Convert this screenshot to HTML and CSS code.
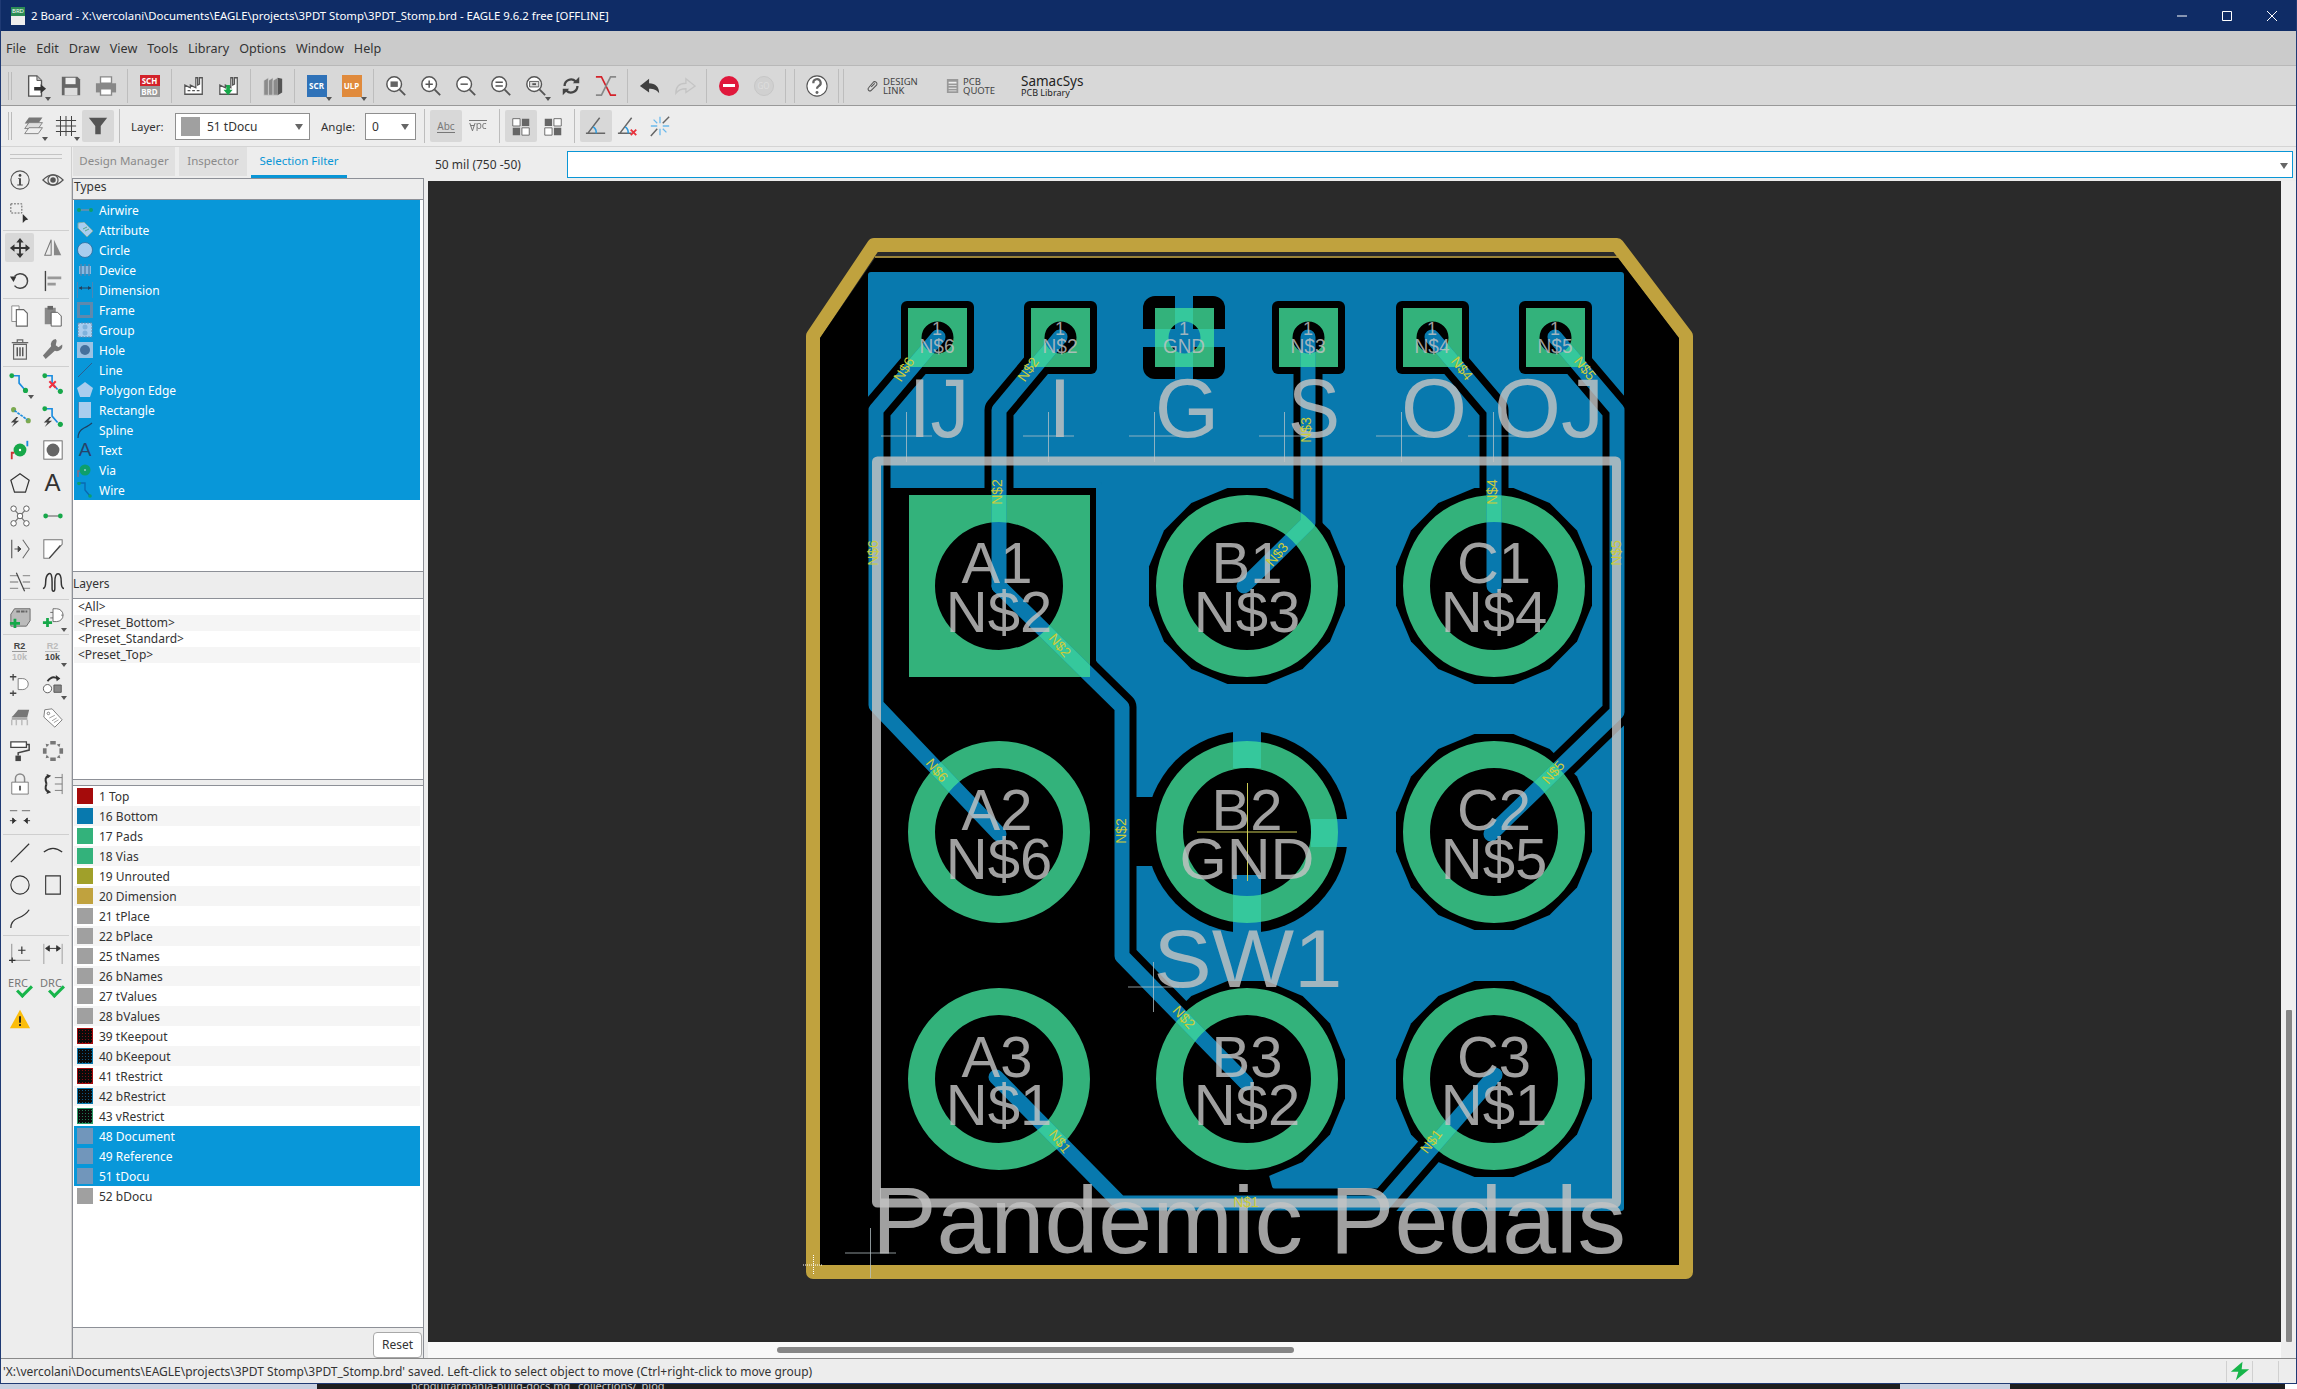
FILE: index.html
```html
<!DOCTYPE html>
<html lang="en">
<head>
    <meta charset="UTF-8">
    <title>2 Board - EAGLE</title>
    <link rel="stylesheet" href="styles.css">
</head>
<body>
<!-- icon sheet -->
<svg class="sheet" xmlns="http://www.w3.org/2000/svg">
    <symbol id="new" viewBox="0 0 24 24"><path d="M4 1h9l5 5v17H4z" fill="#fff" stroke="#555" stroke-width="1.5"/><path d="M13 1v5h5" fill="#bbb" stroke="#555"/><path d="M10 13h7v-3l6 5-6 5v-3h-7z" fill="#333"/></symbol>
    <symbol id="save" viewBox="0 0 24 24"><path d="M2 2h17l3 3v17H2z" fill="#666"/><path d="M6 3h11v7H6z" fill="#eee"/><path d="M5 14h14v8H5z" fill="#ddd"/></symbol>
    <symbol id="print" viewBox="0 0 24 24"><path d="M6 2h12v7H6z" fill="#fff" stroke="#888" stroke-width="1.5"/><path d="M1 9h22v10H1z" fill="#888"/><path d="M6 15h12v7H6z" fill="#fff" stroke="#888" stroke-width="1.5"/></symbol>
    <symbol id="factory" viewBox="0 0 24 24"><path d="M2 21V11l6 3v-3l6 3V3h2v8l2-1V3h3v18z" fill="#fff" stroke="#555" stroke-width="1.4"/><path d="M5 17h3M10 17h3M15 17h3" stroke="#555" stroke-width="1.4"/></symbol>
    <symbol id="factory2" viewBox="0 0 24 24"><path d="M2 21V11l6 3v-3l6 3V3h2v8l2-1V3h3v18z" fill="#fff" stroke="#555" stroke-width="1.4"/><path d="M9 11h4v5h3l-5 6-5-6h3z" fill="#17a84a"/></symbol>
    <symbol id="books" viewBox="0 0 24 24"><path d="M2 6l5-3v19H2zM7 6l5-3v19H7zM12 6l5-3v19h-5z" fill="#8b8b8b" stroke="#d8d8d8" stroke-width=".6"/><path d="M17 3l5 1v15l-5 3z" fill="#555"/></symbol>
    <symbol id="zoomfit" viewBox="0 0 24 24"><circle cx="10" cy="10" r="8" fill="#fff" stroke="#555" stroke-width="1.6"/><path d="M6 7h8v6H6z" fill="#666"/><path d="M16 16l6 6" stroke="#555" stroke-width="2"/></symbol>
    <symbol id="zoomin" viewBox="0 0 24 24"><circle cx="10" cy="10" r="8" fill="#fff" stroke="#555" stroke-width="1.6"/><path d="M6 10h8M10 6v8" stroke="#555" stroke-width="1.6"/><path d="M16 16l6 6" stroke="#555" stroke-width="2"/></symbol>
    <symbol id="zoomout" viewBox="0 0 24 24"><circle cx="10" cy="10" r="8" fill="#fff" stroke="#555" stroke-width="1.6"/><path d="M6 10h8" stroke="#555" stroke-width="1.6"/><path d="M16 16l6 6" stroke="#555" stroke-width="2"/></symbol>
    <symbol id="zoomsel" viewBox="0 0 24 24"><circle cx="10" cy="10" r="8" fill="#fff" stroke="#555" stroke-width="1.6"/><path d="M6 8h8M6 12h8" stroke="#555" stroke-width="1.6"/><path d="M16 16l6 6" stroke="#555" stroke-width="2"/></symbol>
    <symbol id="zoomprev" viewBox="0 0 24 24"><circle cx="10" cy="10" r="8" fill="#fff" stroke="#555" stroke-width="1.6"/><path d="M5 7h10v6H5z" fill="#ddd" stroke="#555"/><path d="M8 9h4v2H8z" fill="#555"/><path d="M16 16l6 6" stroke="#555" stroke-width="2"/></symbol>
    <symbol id="redraw" viewBox="0 0 24 24"><path d="M5 12a7 7 0 0 1 12-5" fill="none" stroke="#444" stroke-width="2.5"/><path d="M19 12a7 7 0 0 1-12 5" fill="none" stroke="#444" stroke-width="2.5"/><path d="M14 9h7V2zM10 15H3v7z" fill="#444"/></symbol>
    <symbol id="ratsnest" viewBox="0 0 24 24"><path d="M1 2h6l10 20h6" fill="none" stroke="#d3222a" stroke-width="1.8"/><path d="M23 2h-6L7 22H1" fill="none" stroke="#888" stroke-width="1.8"/></symbol>
    <symbol id="undo" viewBox="0 0 24 24"><path d="M11 4L1 12l10 7v-4c5 0 8 1 11 5 0-7-4-11-11-11z" fill="#3f3f3f"/></symbol>
    <symbol id="redo" viewBox="0 0 24 24"><path d="M13 4l10 8-10 7v-4c-5 0-8 1-11 5 0-7 4-11 11-11z" fill="none" stroke="#c4c4c4" stroke-width="1.4"/></symbol>
    <symbol id="help" viewBox="0 0 24 24"><circle cx="12" cy="12" r="11" fill="#fff" stroke="#555" stroke-width="1.2"/><path d="M8 9a4 4 0 1 1 6 3c-1 1-2 1-2 3" fill="none" stroke="#666" stroke-width="2.4"/><circle cx="12" cy="19" r="1.6" fill="#666"/></symbol>
    <symbol id="linkic" viewBox="0 0 16 16"><path d="M6 9l4-4M3 10l5-6a2 2 0 0 1 4 3l-6 6a2 2 0 0 1-3-3z" fill="none" stroke="#555" stroke-width="1.2"/></symbol>
    <symbol id="quoteic" viewBox="0 0 16 16"><path d="M1 0h13v16H1z" fill="#999"/><path d="M3 3h9v2H3zM3 7h9v1H3zM3 10h9v1H3zM3 13h9v1H3z" fill="#eee"/></symbol>
    <symbol id="layers" viewBox="0 0 26 26"><path d="M7 3h16l-5 7H2z" fill="#777"/><path d="M7 9h16l-5 7H2z" fill="#ddd" stroke="#777"/><path d="M7 15h16l-5 7H2z" fill="#eee" stroke="#777"/></symbol>
    <symbol id="grid" viewBox="0 0 24 24"><path d="M6 1v22M12 1v22M18 1v22M1 6h22M1 12h22M1 18h22" stroke="#444" stroke-width="1.1"/></symbol>
    <symbol id="filter" viewBox="0 0 24 24"><path d="M2 3h20l-7 9v9H9v-9z" fill="#555"/></symbol>
    <symbol id="four1" viewBox="0 0 24 24"><path d="M3 4h8v8H3zM13 14h8v8h-8z" fill="#fff" stroke="#666"/><path d="M13 4h8v8h-8zM3 14h8v8H3z" fill="#666"/></symbol>
    <symbol id="four2" viewBox="0 0 24 24"><path d="M13 4h8v8h-8zM3 14h8v8H3z" fill="#fff" stroke="#666"/><path d="M3 4h8v8H3zM13 14h8v8h-8z" fill="#666"/></symbol>
    <symbol id="angle1" viewBox="0 0 24 24"><path d="M1 20h21M3 20L16 3" stroke="#666" stroke-width="1.6"/><path d="M9 13q4 3 3 7" fill="none" stroke="#2a9be0" stroke-width="1.6"/></symbol>
    <symbol id="angle2" viewBox="0 0 24 24"><path d="M1 20h15M3 20L16 3" stroke="#666" stroke-width="1.6"/><path d="M9 13q4 3 3 7" fill="none" stroke="#2a9be0" stroke-width="1.6"/><path d="M15 16l6 6M21 16l-6 6" stroke="#e8323c" stroke-width="2"/></symbol>
    <symbol id="angle3" viewBox="0 0 24 24"><path d="M2 23L9 15M15 9l7-7" stroke="#666" stroke-width="1.6"/><path d="M12 2v7M12 15v7M2 12h7M15 12h7M5 5l4 4M15 15l4 4" stroke="#6ab9ec" stroke-width="1.4"/></symbol>

    <symbol id="info" viewBox="0 0 24 24"><circle cx="12" cy="12" r="10" fill="none" stroke="#555" stroke-width="1.2"/><circle cx="12" cy="7" r="1.5" fill="#444"/><path d="M10 10h3v7h2v1H9v-1h2v-6h-1z" fill="#444"/></symbol>
    <symbol id="eye" viewBox="0 0 24 24"><path d="M1 12q11-11 22 0q-11 11-22 0z" fill="none" stroke="#555" stroke-width="1.3"/><circle cx="12" cy="12" r="5.5" fill="none" stroke="#555" stroke-width="1.3"/><circle cx="12" cy="12" r="3" fill="#555"/></symbol>
    <symbol id="marquee" viewBox="0 0 24 24"><rect x="2" y="2" width="12" height="10" fill="none" stroke="#555" stroke-dasharray="2 1.5"/><path d="M15 13v10l3-3 3-1z" fill="#333"/></symbol>
    <symbol id="move" viewBox="0 0 24 24"><path d="M12 1l4 5h-3v5h5V8l5 4-5 4v-3h-5v5h3l-4 5-4-5h3v-5H6v3l-5-4 5-4v3h5V6H8z" fill="#333"/></symbol>
    <symbol id="mirror" viewBox="0 0 24 24"><path d="M10 3v17H3z" fill="none" stroke="#777" stroke-width="1.1"/><path d="M13 3v17h8z" fill="#888"/></symbol>
    <symbol id="rotate" viewBox="0 0 24 24"><path d="M6 7a8 8 0 1 1 0 10" fill="none" stroke="#444" stroke-width="1.6"/><path d="M1 7h7l-3 6z" fill="#333"/></symbol>
    <symbol id="align" viewBox="0 0 24 24"><path d="M3 1h1.5v22H3z" fill="#444"/><path d="M6 7h15v3H6zM6 14h9v3H6z" fill="#999"/></symbol>
    <symbol id="copy" viewBox="0 0 24 24"><path d="M3 1h8v17H3z" fill="#fff" stroke="#888"/><path d="M8 5h8l4 4v14H8z" fill="#fff" stroke="#666" stroke-width="1.2"/></symbol>
    <symbol id="paste" viewBox="0 0 24 24"><path d="M3 3h12v18H3z" fill="#888"/><path d="M6 1h6v4H6z" fill="#666"/><path d="M10 8h7l4 4v11H10z" fill="#fff" stroke="#555"/></symbol>
    <symbol id="trash" viewBox="0 0 24 24"><path d="M3 5h18M9 5V2h6v3M5 7h14v16H5z" fill="none" stroke="#666" stroke-width="1.3"/><path d="M9 10v10M12 10v10M15 10v10" stroke="#555" stroke-width="1.6"/></symbol>
    <symbol id="wrench" viewBox="0 0 24 24"><path d="M15 1a6 6 0 0 0-5 8L1 19l3 4 10-9a6 6 0 0 0 8-7l-4 3-3-2 1-5z" fill="#777"/></symbol>
    <symbol id="route" viewBox="0 0 24 24"><path d="M4 3h7v8l6 7" fill="none" stroke="#1b8de0" stroke-width="1.8"/><circle cx="3" cy="3" r="2.6" fill="#17a84a"/><circle cx="18" cy="19" r="2.8" fill="#17a84a"/></symbol>
    <symbol id="ripup" viewBox="0 0 24 24"><path d="M4 3h7v8l6 7" fill="none" stroke="#1b8de0" stroke-width="1.8"/><circle cx="3" cy="3" r="2.6" fill="#17a84a"/><circle cx="20" cy="20" r="2.8" fill="#17a84a"/><path d="M8 9l7 7M15 9l-7 7" stroke="#f03040" stroke-width="2.2"/></symbol>
    <symbol id="split" viewBox="0 0 24 24"><circle cx="5" cy="4" r="2.8" fill="#7caa50"/><circle cx="21" cy="16" r="2.8" fill="#7caa50"/><path d="M6 5l14 10" stroke="#1b8de0" stroke-dasharray="3 1" stroke-width="1.8"/><path d="M8 12l-6 6h4l-3 5 8-7H7l3-4z" fill="#444"/></symbol>
    <symbol id="split2" viewBox="0 0 24 24"><path d="M4 3h7v8l6 7" fill="none" stroke="#1b8de0" stroke-width="1.8"/><circle cx="3" cy="3" r="2.6" fill="#17a84a"/><circle cx="20" cy="20" r="2.8" fill="#17a84a"/><path d="M8 12l-6 6h4l-3 5 8-7H7l3-4z" fill="#444"/></symbol>
    <symbol id="via" viewBox="0 0 24 24"><path d="M3 22v-7h3" fill="none" stroke="#c33" stroke-width="2"/><path d="M20 8V2" stroke="#1b8de0" stroke-width="2"/><circle cx="12" cy="12" r="7" fill="#17a84a"/><circle cx="12" cy="12" r="1.3" fill="#fff"/></symbol>
    <symbol id="hole" viewBox="0 0 24 24"><rect x="2" y="2" width="20" height="20" fill="#fff" stroke="#666"/><circle cx="12" cy="12" r="7" fill="#666"/></symbol>
    <symbol id="poly" viewBox="0 0 24 24"><path d="M12 2l10 7-4 13H6L2 9z" fill="none" stroke="#333" stroke-width="1.3"/></symbol>
    <symbol id="star" viewBox="0 0 24 24"><path d="M5 4l14 16M19 4L5 20" stroke="#777" stroke-width="1.3"/><circle cx="5" cy="4" r="3" fill="#fff" stroke="#555"/><circle cx="19" cy="4" r="3" fill="#fff" stroke="#555"/><circle cx="5" cy="20" r="3" fill="#fff" stroke="#555"/><circle cx="19" cy="20" r="3" fill="#fff" stroke="#555"/><circle cx="12" cy="12" r="3" fill="#fff" stroke="#555"/></symbol>
    <symbol id="airw" viewBox="0 0 24 24"><path d="M4 12h16" stroke="#888" stroke-width="1.6"/><circle cx="4" cy="12" r="2.6" fill="#17a84a"/><circle cx="20" cy="12" r="2.6" fill="#17a84a"/></symbol>
    <symbol id="bus" viewBox="0 0 24 24"><path d="M3 2v20" stroke="#555" stroke-width="1.2"/><path d="M6 12h7M13 12l-3-3v6z" stroke="#444" fill="#444"/><path d="M15 2l7 10-7 10" fill="none" stroke="#666" stroke-width="1.1"/></symbol>
    <symbol id="miter" viewBox="0 0 24 24"><path d="M2 2h20v5L8 22H2z" fill="#fff" stroke="#777" stroke-width="1.1"/><path d="M8 22L20 8" stroke="#444" stroke-width="1.3"/></symbol>
    <symbol id="lines" viewBox="0 0 24 24"><path d="M1 5h9M1 12h9M1 19h9M15 5h8M15 12h8M15 19h8" stroke="#999" stroke-width="1.4"/><path d="M8 2l9 20" stroke="#444" stroke-width="1.3"/></symbol>
    <symbol id="meander" viewBox="0 0 24 24"><path d="M1 19q3 0 3-7t3.500-9 3.500 9v7q0 3 1.500 3t1.500-3v-7q0-9 3.500-9t3.500 9q0 7 3 7" fill="none" stroke="#333" stroke-width="1.6"/></symbol>
    <symbol id="addpart" viewBox="0 0 24 24"><path d="M2 9l4-6h17v13l-4 6H2z" fill="#bbb" stroke="#666"/><path d="M8 6h12" stroke="#666" stroke-width="2" stroke-dasharray="4 1"/><path d="M1 19h11M6.500 14v10" stroke="#17a84a" stroke-width="3"/></symbol>
    <symbol id="addgate" viewBox="0 0 24 24"><path d="M12 3h4a7 7 0 0 1 0 14h-4z" fill="#fff" stroke="#666"/><path d="M23 10h-2M12 7H9M12 13H9" stroke="#666"/><path d="M1 18h10M6 13v10" stroke="#17a84a" stroke-width="3"/></symbol>
    <symbol id="invoke" viewBox="0 0 24 24"><path d="M10 5h5a6 6 0 0 1 0 12h-5z" fill="#fff" stroke="#777"/><path d="M1 3h7M4.500 0v7M1 21h7M4.500 18v6" stroke="#444" stroke-width="1.4"/></symbol>
    <symbol id="replace" viewBox="0 0 24 24"><circle cx="6" cy="16" r="4.500" fill="#fff" stroke="#555"/><path d="M13 12h8v8h-8z" fill="#888" stroke="#555"/><path d="M6 8q5-7 11-3" fill="none" stroke="#333" stroke-width="2"/><path d="M15 1l5 4-4 3z" fill="#333"/></symbol>
    <symbol id="chip" viewBox="0 0 24 24"><path d="M5 9l5-6h12l-2 8H3z" fill="#777"/><path d="M3 11h17v3H3z" fill="#aaa"/><path d="M3 14v6M8 14v6M14 14v6M20 14v6" stroke="#bbb" stroke-width="1.6"/></symbol>
    <symbol id="tag" viewBox="0 0 24 24"><path d="M3 3l8-1 11 12-8 8L2 11z" fill="#fff" stroke="#777"/><circle cx="7" cy="7" r="1.400" fill="none" stroke="#777"/><path d="M8 12l6-3M11 15l5-3M13 17l5-3" stroke="#999"/></symbol>
    <symbol id="paint" viewBox="0 0 24 24"><path d="M2 2h17v6H2z" fill="#fff" stroke="#444" stroke-width="1.4"/><path d="M19 5h3v6L10 14v3" fill="none" stroke="#444" stroke-width="1.6"/><path d="M7 17h6v6H7z" fill="#444"/></symbol>
    <symbol id="ring" viewBox="0 0 24 24"><path d="M9 1h6v4H9zM9 19h6v4H9zM1 9h4v6H1zM19 9h4v6h-4zM4 4l4 1-3 3zM20 4l-1 4-3-3zM4 20l1-4 3 3zM20 20l-4-1 3-3z" fill="#777"/></symbol>
    <symbol id="lock" viewBox="0 0 24 24"><path d="M7 10V6a5 5 0 0 1 10 0v4" fill="none" stroke="#888" stroke-width="1.6"/><path d="M3 10h18v13H3z" fill="#fff" stroke="#777"/><path d="M11 14h2v5h-2z" fill="#555"/></symbol>
    <symbol id="swap" viewBox="0 0 24 24"><path d="M7 3q-5 2-2 9M7 21q-5-3-2-9" fill="none" stroke="#333" stroke-width="2.200"/><path d="M5 1l5 2-4 3zM5 23l5-2-4-3z" fill="#333"/><path d="M22 1v22M14 5h8M14 12h8M14 19h8" stroke="#777"/></symbol>
    <symbol id="gather" viewBox="0 0 24 24"><path d="M1 5h8M14 5h9" stroke="#888" stroke-width="1.400"/><path d="M1 16h7M7 16l-3-3v6zM23 16h-7M17 16l3-3v6z" stroke="#333" fill="#333"/></symbol>
    <symbol id="line" viewBox="0 0 24 24"><path d="M2 23L22 3" stroke="#333" stroke-width="1.300"/></symbol>
    <symbol id="arc" viewBox="0 0 24 24"><path d="M2 12q10-8 20 0" fill="none" stroke="#333" stroke-width="1.300"/></symbol>
    <symbol id="circ" viewBox="0 0 24 24"><circle cx="12" cy="12" r="10" fill="none" stroke="#333" stroke-width="1.200"/></symbol>
    <symbol id="rect" viewBox="0 0 24 24"><path d="M4 2h16v20H4z" fill="none" stroke="#333" stroke-width="1.200"/></symbol>
    <symbol id="curve" viewBox="0 0 24 24"><path d="M2 23q0-8 8-11t12-9" fill="none" stroke="#333" stroke-width="1.400"/></symbol>
    <symbol id="mark" viewBox="0 0 24 24"><path d="M3 2v20M1 20h22" stroke="#888" stroke-width="1"/><path d="M10 9h8M14 5v8M0 20h7M3.500 17v6" stroke="#333" stroke-width="1.300"/></symbol>
    <symbol id="dimen" viewBox="0 0 24 24"><path d="M2 2v22M22 2v22" stroke="#999"/><path d="M4 7h16M4 7l4-3v6zM20 7l-4-3v6z" stroke="#333" fill="#333"/></symbol>
    <symbol id="warn" viewBox="0 0 24 24"><path d="M12 2l11 20H1z" fill="#fbbd0a"/><path d="M11 9h2v7h-2zM11 17.500h2v2h-2z" fill="#222"/></symbol>
    <symbol id="bolt" viewBox="0 0 24 24"><path d="M15 1L1 13h9l-3 10 16-13h-9z" fill="#17b54a"/></symbol>

    <symbol id="f-air" viewBox="0 0 16 16"><path d="M3 8h10" stroke="#6f8fa8" stroke-width="1.500"/><circle cx="2" cy="8" r="2" fill="#0e9f6b"/><circle cx="14" cy="8" r="2" fill="#0e9f6b"/></symbol>
    <symbol id="f-tag" viewBox="0 0 16 16"><path d="M1 1l6-1 9 9-6 6-9-9z" fill="#a9cdee" stroke="#7aa"/><path d="M6 7l4-2M8 9l4-2" stroke="#5a8"/></symbol>
    <symbol id="f-circ" viewBox="0 0 16 16"><circle cx="8" cy="8" r="7.500" fill="#a9cdee" stroke="#2b6c9e" stroke-width=".8"/></symbol>
    <symbol id="f-dev" viewBox="0 0 16 16"><path d="M2 4h12v8H2z" fill="#8ab8e0"/><path d="M4 2v12M8 2v12M12 2v12" stroke="#4f86b3" stroke-width="1.500"/></symbol>
    <symbol id="f-dim" viewBox="0 0 16 16"><path d="M.5 0v16M15.500 0v16" stroke="#4b86b5"/><path d="M2 6h12" stroke="#22415f"/><path d="M2 6l3-2v4zM14 6l-3-2v4z" fill="#22415f"/></symbol>
    <symbol id="f-frame" viewBox="0 0 16 16"><path d="M0 0h16v16H0z" fill="#5f89ad"/><path d="M3 3h10v10H3z" fill="#0897d9"/></symbol>
    <symbol id="f-group" viewBox="0 0 16 16"><path d="M1 1h14v14H1z" fill="#a9cdee" stroke="#5f89ad" stroke-dasharray="2 1"/><circle cx="8" cy="5" r="2.500" fill="#7fb2dc"/><circle cx="8" cy="11" r="2.500" fill="#7fb2dc"/></symbol>
    <symbol id="f-hole" viewBox="0 0 16 16"><path d="M0 0h16v16H0z" fill="#9cc2e3"/><circle cx="8" cy="8" r="5" fill="#45709c"/></symbol>
    <symbol id="f-line" viewBox="0 0 16 16"><path d="M1 15L15 1" stroke="#2c5f8f"/></symbol>
    <symbol id="f-poly" viewBox="0 0 16 16"><path d="M8 0l8 6-3 9H3L0 6z" fill="#a9cdee"/></symbol>
    <symbol id="f-rect" viewBox="0 0 16 16"><path d="M2 0h12v16H2z" fill="#a9cdee"/><path d="M1.500 0v16" stroke="#4b86b5"/></symbol>
    <symbol id="f-spl" viewBox="0 0 16 16"><path d="M1 16q0-7 6-10t8-5" fill="none" stroke="#1f3f60" stroke-width="1.100"/></symbol>
    <symbol id="f-via" viewBox="0 0 16 16"><path d="M1 15v-6h2" fill="none" stroke="#8f6a80" stroke-width="1.400"/><circle cx="8" cy="8" r="5.500" fill="#0e9f6b"/><circle cx="8" cy="8" r="1" fill="#9cc"/></symbol>
    <symbol id="f-wire" viewBox="0 0 16 16"><path d="M2 1h6v7l5 6" fill="none" stroke="#0a6ab0" stroke-width="1.400"/><circle cx="2" cy="1.500" r="1.800" fill="#0e9f6b"/><circle cx="13" cy="14" r="1.800" fill="#0e9f6b"/></symbol>
</svg>

<div class="window">
    <header class="titlebar">
        <span class="app-icon"><span class="app-icon-txt">BRD</span></span>
        <span class="title-text">2 Board - X:\vercolani\Documents\EAGLE\projects\3PDT Stomp\3PDT_Stomp.brd - EAGLE 9.6.2 free [OFFLINE]</span>
        <div class="win-btns">
            <svg class="win-btn" viewBox="0 0 12 12"><path d="M1 6h10" stroke="#fff" stroke-width="1"/></svg>
            <svg class="win-btn" viewBox="0 0 12 12"><path d="M1.500 1.500h9v9h-9z" fill="none" stroke="#fff" stroke-width="1"/></svg>
            <svg class="win-btn" viewBox="0 0 12 12"><path d="M1 1l10 10M11 1L1 11" stroke="#fff" stroke-width="1"/></svg>
        </div>
    </header>

    <nav class="menubar">
        <a>File</a><a>Edit</a><a>Draw</a><a>View</a><a>Tools</a><a>Library</a><a>Options</a><a>Window</a><a>Help</a>
    </nav>

    <!-- main toolbar -->
    <div class="toolbar tb-main">
        <span class="grip"></span>
        <span class="tool drop"><svg class="ico"><use href="#new"/></svg></span>
        <span class="tool"><svg class="ico"><use href="#save"/></svg></span>
        <span class="tool"><svg class="ico"><use href="#print"/></svg></span>
        <span class="sep"></span>
        <span class="tool"><span class="schbrd"><span>SCH</span><span>BRD</span></span></span>
        <span class="sep"></span>
        <span class="tool"><svg class="ico"><use href="#factory"/></svg></span>
        <span class="tool"><svg class="ico"><use href="#factory2"/></svg></span>
        <span class="sep"></span>
        <span class="tool"><svg class="ico"><use href="#books"/></svg></span>
        <span class="sep"></span>
        <span class="tool drop"><span class="badge badge-blue">SCR</span></span>
        <span class="tool drop"><span class="badge badge-orange">ULP</span></span>
        <span class="sep"></span>
        <span class="tool"><svg class="ico"><use href="#zoomfit"/></svg></span>
        <span class="tool"><svg class="ico"><use href="#zoomin"/></svg></span>
        <span class="tool"><svg class="ico"><use href="#zoomout"/></svg></span>
        <span class="tool"><svg class="ico"><use href="#zoomsel"/></svg></span>
        <span class="tool drop"><svg class="ico"><use href="#zoomprev"/></svg></span>
        <span class="tool"><svg class="ico"><use href="#redraw"/></svg></span>
        <span class="tool"><svg class="ico"><use href="#ratsnest"/></svg></span>
        <span class="sep"></span>
        <span class="tool"><svg class="ico"><use href="#undo"/></svg></span>
        <span class="tool"><svg class="ico"><use href="#redo"/></svg></span>
        <span class="sep"></span>
        <span class="tool"><span class="stop"></span></span>
        <span class="tool"><span class="go">GO</span></span>
        <span class="sep"></span>
        <span class="sep"></span>
        <span class="tool"><svg class="ico"><use href="#help"/></svg></span>
        <span class="sep"></span>
        <span class="sep sep-double"></span>
        <span class="link-btn link-design"><svg class="ico-sm"><use href="#linkic"/></svg><span class="link-txt">DESIGN<br>LINK</span></span>
        <span class="link-btn link-quote"><svg class="ico-sm"><use href="#quoteic"/></svg><span class="link-txt">PCB<br>QUOTE</span></span>
        <span class="samac"><span class="samac-big">SamacSys</span><span class="samac-small">PCB Library</span></span>
    </div>

    <!-- parameter toolbar -->
    <div class="toolbar tb-param">
        <span class="grip"></span>
        <span class="tool tool-param drop"><svg class="ico"><use href="#layers"/></svg></span>
        <span class="tool tool-param drop"><svg class="ico"><use href="#grid"/></svg></span>
        <span class="tool tool-param on"><svg class="ico"><use href="#filter"/></svg></span>
        <span class="sep"></span>
        <label class="param-label">Layer:</label>
        <span class="select select-layer"><span class="select-swatch"></span>51 tDocu<span class="arrow"></span></span>
        <label class="param-label">Angle:</label>
        <span class="select select-angle">0<span class="arrow"></span></span>
        <span class="sep"></span>
        <span class="tool tool-param on"><span class="abc">Abc</span></span>
        <span class="tool tool-param"><span class="abc abc-flip">Abc</span></span>
        <span class="sep"></span>
        <span class="tool tool-param on"><svg class="ico"><use href="#four1"/></svg></span>
        <span class="tool tool-param"><svg class="ico"><use href="#four2"/></svg></span>
        <span class="sep"></span>
        <span class="tool tool-param on"><svg class="ico"><use href="#angle1"/></svg></span>
        <span class="tool tool-param"><svg class="ico"><use href="#angle2"/></svg></span>
        <span class="tool tool-param"><svg class="ico"><use href="#angle3"/></svg></span>
    </div>

    <div class="workspace">
        <!-- command icons -->
        <aside class="cmds">
            <div class="cmds-grip"></div>
            <div class="tgroup">
                <span class="cmd"><svg class="ico"><use href="#info"/></svg></span>
                <span class="cmd"><svg class="ico"><use href="#eye"/></svg></span>
                <span class="cmd"><svg class="ico"><use href="#marquee"/></svg></span>
                <span class="cmd"></span>
            </div>
            <div class="tgroup">
                <span class="cmd on"><svg class="ico"><use href="#move"/></svg></span>
                <span class="cmd"><svg class="ico"><use href="#mirror"/></svg></span>
                <span class="cmd"><svg class="ico"><use href="#rotate"/></svg></span>
                <span class="cmd"><svg class="ico"><use href="#align"/></svg></span>
            </div>
            <div class="tgroup">
                <span class="cmd"><svg class="ico"><use href="#copy"/></svg></span>
                <span class="cmd"><svg class="ico"><use href="#paste"/></svg></span>
                <span class="cmd"><svg class="ico"><use href="#trash"/></svg></span>
                <span class="cmd"><svg class="ico"><use href="#wrench"/></svg></span>
            </div>
            <div class="tgroup">
                <span class="cmd drop"><svg class="ico"><use href="#route"/></svg></span>
                <span class="cmd"><svg class="ico"><use href="#ripup"/></svg></span>
                <span class="cmd"><svg class="ico"><use href="#split"/></svg></span>
                <span class="cmd"><svg class="ico"><use href="#split2"/></svg></span>
                <span class="cmd"><svg class="ico"><use href="#via"/></svg></span>
                <span class="cmd"><svg class="ico"><use href="#hole"/></svg></span>
                <span class="cmd"><svg class="ico"><use href="#poly"/></svg></span>
                <span class="cmd"><span class="big-a">A</span></span>
                <span class="cmd"><svg class="ico"><use href="#star"/></svg></span>
                <span class="cmd"><svg class="ico"><use href="#airw"/></svg></span>
                <span class="cmd"><svg class="ico"><use href="#bus"/></svg></span>
                <span class="cmd"><svg class="ico"><use href="#miter"/></svg></span>
                <span class="cmd"><svg class="ico"><use href="#lines"/></svg></span>
                <span class="cmd"><svg class="ico"><use href="#meander"/></svg></span>
            </div>
            <div class="tgroup">
                <span class="cmd"><svg class="ico"><use href="#addpart"/></svg></span>
                <span class="cmd drop"><svg class="ico"><use href="#addgate"/></svg></span>
            </div>
            <div class="tgroup">
                <span class="cmd"><span class="rval"><b>R2</b><i>10k</i></span></span>
                <span class="cmd drop"><span class="rval rval-alt"><i>R2</i><b>10k</b></span></span>
                <span class="cmd"><svg class="ico"><use href="#invoke"/></svg></span>
                <span class="cmd drop"><svg class="ico"><use href="#replace"/></svg></span>
                <span class="cmd"><svg class="ico"><use href="#chip"/></svg></span>
                <span class="cmd"><svg class="ico"><use href="#tag"/></svg></span>
                <span class="cmd"><svg class="ico"><use href="#paint"/></svg></span>
                <span class="cmd"><svg class="ico"><use href="#ring"/></svg></span>
                <span class="cmd"><svg class="ico"><use href="#lock"/></svg></span>
                <span class="cmd"><svg class="ico"><use href="#swap"/></svg></span>
                <span class="cmd"><svg class="ico"><use href="#gather"/></svg></span>
                <span class="cmd"></span>
            </div>
            <div class="tgroup">
                <span class="cmd"><svg class="ico"><use href="#line"/></svg></span>
                <span class="cmd"><svg class="ico"><use href="#arc"/></svg></span>
                <span class="cmd"><svg class="ico"><use href="#circ"/></svg></span>
                <span class="cmd"><svg class="ico"><use href="#rect"/></svg></span>
                <span class="cmd"><svg class="ico"><use href="#curve"/></svg></span>
                <span class="cmd"></span>
            </div>
            <div class="tgroup tgroup-last">
                <span class="cmd"><svg class="ico"><use href="#mark"/></svg></span>
                <span class="cmd"><svg class="ico"><use href="#dimen"/></svg></span>
                <span class="cmd"><span class="check">ERC</span></span>
                <span class="cmd"><span class="check">DRC</span></span>
                <span class="cmd"><svg class="ico"><use href="#warn"/></svg></span>
            </div>
        </aside>

        <!-- side panel -->
        <section class="panel">
            <div class="tabs">
                <span class="tab tab-design">Design Manager</span>
                <span class="tab tab-inspector">Inspector</span>
                <span class="tab tab-filter active">Selection Filter</span>
            </div>
            <div class="sec-head sec-types">Types</div>
            <ul class="list list-types">
                <li class="row sel"><svg class="fic"><use href="#f-air"/></svg>Airwire</li>
                <li class="row sel"><svg class="fic"><use href="#f-tag"/></svg>Attribute</li>
                <li class="row sel"><svg class="fic"><use href="#f-circ"/></svg>Circle</li>
                <li class="row sel"><svg class="fic"><use href="#f-dev"/></svg>Device</li>
                <li class="row sel"><svg class="fic"><use href="#f-dim"/></svg>Dimension</li>
                <li class="row sel"><svg class="fic"><use href="#f-frame"/></svg>Frame</li>
                <li class="row sel"><svg class="fic"><use href="#f-group"/></svg>Group</li>
                <li class="row sel"><svg class="fic"><use href="#f-hole"/></svg>Hole</li>
                <li class="row sel"><svg class="fic"><use href="#f-line"/></svg>Line</li>
                <li class="row sel"><svg class="fic"><use href="#f-poly"/></svg>Polygon Edge</li>
                <li class="row sel"><svg class="fic"><use href="#f-rect"/></svg>Rectangle</li>
                <li class="row sel"><svg class="fic"><use href="#f-spl"/></svg>Spline</li>
                <li class="row sel"><span class="fic fic-a">A</span>Text</li>
                <li class="row sel"><svg class="fic"><use href="#f-via"/></svg>Via</li>
                <li class="row sel"><svg class="fic"><use href="#f-wire"/></svg>Wire</li>
            </ul>
            <div class="sec-head sec-layers">Layers</div>
            <ul class="list list-presets">
                <li class="preset">&lt;All&gt;</li>
                <li class="preset">&lt;Preset_Bottom&gt;</li>
                <li class="preset">&lt;Preset_Standard&gt;</li>
                <li class="preset">&lt;Preset_Top&gt;</li>
            </ul>
            <div class="sec-split"></div>
            <ul class="list list-layers">
                <li class="row"><span class="sw sw-top"></span>1 Top</li>
                <li class="row"><span class="sw sw-bot"></span>16 Bottom</li>
                <li class="row"><span class="sw sw-pad"></span>17 Pads</li>
                <li class="row"><span class="sw sw-pad"></span>18 Vias</li>
                <li class="row"><span class="sw sw-unr"></span>19 Unrouted</li>
                <li class="row"><span class="sw sw-dim"></span>20 Dimension</li>
                <li class="row"><span class="sw"></span>21 tPlace</li>
                <li class="row"><span class="sw"></span>22 bPlace</li>
                <li class="row"><span class="sw"></span>25 tNames</li>
                <li class="row"><span class="sw"></span>26 bNames</li>
                <li class="row"><span class="sw"></span>27 tValues</li>
                <li class="row"><span class="sw"></span>28 bValues</li>
                <li class="row"><span class="sw sw-dots sw-red"></span>39 tKeepout</li>
                <li class="row"><span class="sw sw-dots sw-blue"></span>40 bKeepout</li>
                <li class="row"><span class="sw sw-dots sw-red"></span>41 tRestrict</li>
                <li class="row"><span class="sw sw-dots sw-blue"></span>42 bRestrict</li>
                <li class="row"><span class="sw sw-dots sw-green"></span>43 vRestrict</li>
                <li class="row sel"><span class="sw sw-sel"></span>48 Document</li>
                <li class="row sel"><span class="sw sw-sel"></span>49 Reference</li>
                <li class="row sel"><span class="sw sw-sel"></span>51 tDocu</li>
                <li class="row"><span class="sw"></span>52 bDocu</li>
            </ul>
            <div class="panel-foot"><span class="reset-btn">Reset</span></div>
        </section>

        <!-- board view -->
        <main class="view">
            <div class="coordbar">
                <span class="coords">50 mil (750 -50)</span>
                <span class="cmdline"><span class="arrow"></span></span>
            </div>
            <div class="canvas-row">
                <div class="canvas">
                    <svg class="board" viewBox="427 181 1853 1161" xmlns="http://www.w3.org/2000/svg">
                        <defs>
                            <path id="pad-round" fill-rule="evenodd" d="M-91 0a91 91 0 1 0 182 0a91 91 0 1 0-182 0zM-64 0a64 64 0 1 0 128 0a64 64 0 1 0-128 0z"/>
                            <path id="pad-square" fill-rule="evenodd" d="M-90 -91h181v182h-181zM-64 0a64 64 0 1 0 128 0a64 64 0 1 0-128 0z"/>
                            <path id="pad-head" fill-rule="evenodd" d="M-29.500 -29.500h59v59h-59zM-16 0a16 16 0 1 0 32 0a16 16 0 1 0-32 0z"/>
                            <polygon id="pad-clear" points="-19.500,-98 19.500,-98 55.600,-83 83,-55.600 98,-19.500 98,19.500 83,55.600 55.600,83 19.500,98 -19.500,98 -55.600,83 -83,55.600 -98,19.500 -98,-19.500 -83,-55.600 -55.600,-83"/>
                            <g id="pads">
                                <use href="#pad-square" x="998" y="586"/>
                                <use href="#pad-round" x="1246" y="586"/>
                                <use href="#pad-round" x="1493" y="586"/>
                                <use href="#pad-round" x="998" y="832"/>
                                <use href="#pad-round" x="1246" y="832"/>
                                <use href="#pad-round" x="1493" y="832"/>
                                <use href="#pad-round" x="998" y="1079"/>
                                <use href="#pad-round" x="1246" y="1079"/>
                                <use href="#pad-round" x="1493" y="1079"/>
                                <use href="#pad-head" x="936.500" y="337.500"/>
                                <use href="#pad-head" x="1059.500" y="337.500"/>
                                <use href="#pad-head" x="1183.500" y="337.500"/>
                                <use href="#pad-head" x="1307.500" y="337.500"/>
                                <use href="#pad-head" x="1431.500" y="337.500"/>
                                <use href="#pad-head" x="1554.500" y="337.500"/>
                            </g>
                            <g id="routes">
                                <polyline points="937,337 875,410 875,705 998,834"/>
                                <polyline points="1059,337 998,410 998,586"/>
                                <polyline points="998,586 1121,707 1121,956 1245,1083"/>
                                <polyline points="1307,337 1307,523 1243,586"/>
                                <polyline points="1431,337 1493,410 1493,586"/>
                                <polyline points="1554,337 1616,410 1616,712 1490,834"/>
                                <polyline points="995,1077 1119,1203 1383,1203 1494,1075"/>
                            </g>
                            <g id="spokes">
                                <path d="M1246 728v40M1246 875v61M1310 833h42" stroke-width="28"/>
                                <path d="M1183 290v95M1136 338h94" stroke-width="18"/>
                            </g>
                            <mask id="on-pads" maskUnits="userSpaceOnUse" x="427" y="181" width="1853" height="1161">
                                <use href="#pads" fill="#fff"/>
                            </mask>
                        </defs>

                        <!-- outline and pour -->
                        <polygon class="outline" points="812,336 873,245 1616,245 1685,336 1685,1272 812,1272"/>
                        <polygon class="substrate" points="819,338 874,258 1617,258 1678,338 1678,1265 819,1265"/>
                        <line class="outline-thin" x1="874" y1="257" x2="1617" y2="257"/>
                        <polygon class="pour" points="870,275 1620,275 1620,1208 1395,1208 1383,1186 1274,1186 1271,1175 1300,1150 1245,1083 1121,956 1121,707 1098,660 1098,485 870,485"/>

                        <!-- clearances -->
                        <use class="clear-route" href="#routes"/>
                        <g class="clear-shape">
                            <use href="#pad-clear" x="1246" y="586"/>
                            <use href="#pad-clear" x="1493" y="586"/>
                            <circle cx="1246" cy="832" r="101"/>
                            <use href="#pad-clear" x="1493" y="832"/>
                            <use href="#pad-clear" x="1246" y="1079"/>
                            <use href="#pad-clear" x="1493" y="1079"/>
                            <rect x="1130" y="797" width="37" height="69" rx="5"/>
                            <rect x="900" y="301" width="73" height="73" rx="6"/>
                            <rect x="1023" y="301" width="73" height="73" rx="6"/>
                            <rect x="1142" y="296" width="82" height="83" rx="12"/>
                            <rect x="1271" y="301" width="73" height="73" rx="6"/>
                            <rect x="1395" y="301" width="73" height="73" rx="6"/>
                            <rect x="1518" y="301" width="73" height="73" rx="6"/>
                        </g>

                        <!-- copper -->
                        <use class="pad-fill" href="#pads"/>
                        <use class="route" href="#routes"/>
                        <use class="spoke" href="#spokes"/>
                        <g mask="url(#on-pads)">
                            <use class="route route-lit" href="#routes"/>
                            <use class="spoke spoke-lit" href="#spokes"/>
                        </g>

                        <!-- origins -->
                        <path class="origin" d="M880 436h51M905.500 412v50M1022 436h51M1047.500 412v50M1128 436h51M1153.500 412v50M1258 436h51M1283.500 412v50M1375 436h51M1400.500 412v50M1467 436h51M1492.500 412v50M1127 987h51M1152.500 962v50M844 1253h51M869.500 1228v50"/>
                        <path class="origin origin-yellow" d="M1196 832h100M1246.500 783v98"/>
                        <path class="origin origin-dots" d="M802 1265h20M812.500 1255v20"/>

                        <!-- tDocu -->
                        <rect class="docu-rect" x="875.500" y="461" width="740" height="742" rx="1"/>
                        <g class="docu">
                            <text class="t-head" x="938" y="437" textLength="60" lengthAdjust="spacingAndGlyphs">IJ</text>
                            <text class="t-head" x="1059" y="437">I</text>
                            <text class="t-head" x="1186" y="437" textLength="64" lengthAdjust="spacingAndGlyphs">G</text>
                            <text class="t-head" x="1313" y="437" textLength="52" lengthAdjust="spacingAndGlyphs">S</text>
                            <text class="t-head" x="1433" y="437" textLength="66" lengthAdjust="spacingAndGlyphs">O</text>
                            <text class="t-head" x="1548" y="437" textLength="110" lengthAdjust="spacingAndGlyphs">OJ</text>

                            <text class="t-one" x="936" y="335">1</text>
                            <text class="t-one" x="1059" y="335">1</text>
                            <text class="t-one" x="1183" y="335">1</text>
                            <text class="t-one" x="1307" y="335">1</text>
                            <text class="t-one" x="1431" y="335">1</text>
                            <text class="t-one" x="1554" y="335">1</text>
                            <text class="t-sig" x="936" y="353" textLength="35" lengthAdjust="spacingAndGlyphs">N$6</text>
                            <text class="t-sig" x="1059" y="353" textLength="35" lengthAdjust="spacingAndGlyphs">N$2</text>
                            <text class="t-sig" x="1183" y="353" textLength="42" lengthAdjust="spacingAndGlyphs">GND</text>
                            <text class="t-sig" x="1307" y="353" textLength="35" lengthAdjust="spacingAndGlyphs">N$3</text>
                            <text class="t-sig" x="1431" y="353" textLength="35" lengthAdjust="spacingAndGlyphs">N$4</text>
                            <text class="t-sig" x="1554" y="353" textLength="35" lengthAdjust="spacingAndGlyphs">N$5</text>

                            <text class="t-pad" x="996" y="583">A1</text><text class="t-pad" x="998" y="632">N$2</text>
                            <text class="t-pad" x="1246" y="583">B1</text><text class="t-pad" x="1246" y="632">N$3</text>
                            <text class="t-pad" x="1493" y="583">C1</text><text class="t-pad" x="1493" y="632">N$4</text>
                            <text class="t-pad" x="996" y="830">A2</text><text class="t-pad" x="998" y="879">N$6</text>
                            <text class="t-pad" x="1246" y="830">B2</text><text class="t-pad" x="1246" y="879" textLength="135" lengthAdjust="spacingAndGlyphs">GND</text>
                            <text class="t-pad" x="1493" y="830">C2</text><text class="t-pad" x="1493" y="879">N$5</text>
                            <text class="t-pad" x="996" y="1077">A3</text><text class="t-pad" x="998" y="1125">N$1</text>
                            <text class="t-pad" x="1246" y="1077">B3</text><text class="t-pad" x="1246" y="1125">N$2</text>
                            <text class="t-pad" x="1493" y="1077">C3</text><text class="t-pad" x="1493" y="1125">N$1</text>

                            <text class="t-sw" x="1247" y="987" textLength="189" lengthAdjust="spacingAndGlyphs">SW1</text>
                            <text class="t-brand" x="1248" y="1253" textLength="754" lengthAdjust="spacingAndGlyphs">Pandemic Pedals</text>
                        </g>

                        <!-- net labels -->
                        <g class="nets">
                            <text transform="translate(904 370) rotate(-57)">N$6</text>
                            <text transform="translate(1028 370) rotate(-55)">N$2</text>
                            <text transform="translate(1460 369) rotate(52)">N$4</text>
                            <text transform="translate(1583 369) rotate(52)">N$5</text>
                            <text transform="translate(1306 430) rotate(-90)">N$3</text>
                            <text transform="translate(997 492) rotate(-90)">N$2</text>
                            <text transform="translate(1492 492) rotate(-90)">N$4</text>
                            <text transform="translate(873 553) rotate(-90)">N$6</text>
                            <text transform="translate(1616 553) rotate(-90)">N$5</text>
                            <text transform="translate(1277 555) rotate(-50)">N$3</text>
                            <text transform="translate(1058 646) rotate(50)">N$2</text>
                            <text transform="translate(935 771) rotate(50)">N$6</text>
                            <text transform="translate(1121 831) rotate(-90)">N$2</text>
                            <text transform="translate(1553 773) rotate(-48)">N$5</text>
                            <text transform="translate(1182 1018) rotate(48)">N$2</text>
                            <text transform="translate(1058 1142) rotate(52)">N$1</text>
                            <text transform="translate(1431 1142) rotate(-52)">N$1</text>
                            <text transform="translate(1245 1203)">N$1</text>
                        </g>
                    </svg>
                </div>
                <div class="vscroll"><span class="vthumb"></span></div>
            </div>
            <div class="hscroll"><span class="hthumb"></span></div>
        </main>
    </div>

    <footer class="statusbar">
        <span class="status-msg">'X:\vercolani\Documents\EAGLE\projects\3PDT Stomp\3PDT_Stomp.brd' saved. Left-click to select object to move (Ctrl+right-click to move group)</span>
        <span class="status-cell"><svg class="bolt"><use href="#bolt"/></svg></span>
        <span class="status-cell"></span>
        <span class="status-cell status-end"></span>
    </footer>
</div>

<!-- what shows below the window -->
<div class="desktop">
    <span class="desk-light"></span>
    <span class="desk-dark"><span class="desk-file">pcbguitarmania-build-docs.md _collections/_blog</span></span>
    <span class="desk-light desk-light2"></span>
    <span class="desk-dark desk-dark2"></span>
</div>
</body>
</html>
```

FILE: styles.css
```css
* {
    box-sizing: border-box;
}

html, body {
    margin: 0;
    padding: 0;
    height: 1389px;
    overflow: hidden;
    background: #fff;
    font-family: "Noto Sans", sans-serif;
    font-size: 12px;
    color: #333;
}

.sheet {
    display: none;
}

.window {
    height: 1384px;
    display: flex;
    flex-direction: column;
    border-left: 1px solid #1f3a74;
    border-right: 1px solid #1f3a74;
    border-bottom: 1px solid #1f3a74;
}

/* title bar */
.titlebar {
    height: 31px;
    flex: none;
    display: flex;
    align-items: center;
    background: #0f2c66;
    color: #fff;
    padding-left: 10px;
}

.app-icon {
    width: 14px;
    height: 18px;
    background: #eee;
    margin-right: 6px;
}

.app-icon-txt {
    display: block;
    height: 9px;
    background: #2c8c55;
    color: #fff;
    font-size: 6px;
    line-height: 9px;
    text-align: center;
}

.title-text {
    font-size: 11.35px;
    white-space: nowrap;
}

.win-btns {
    margin-left: auto;
    display: flex;
    margin-right: 18px;
    gap: 33px;
}

.win-btn {
    width: 12px;
    height: 12px;
}

/* menu */
.menubar {
    height: 35px;
    flex: none;
    display: flex;
    align-items: center;
    background: #cbcbcb;
    padding-left: 5px;
    font-size: 12.6px;
    border-bottom: 1px solid #b8b8b8;
    gap: 10px;
}

/* toolbars */
.toolbar {
    flex: none;
    display: flex;
    align-items: center;
}

.tb-main {
    height: 40px;
    background: #d8d8d8;
    border-bottom: 1px solid #999;
}

.tb-param {
    height: 41px;
    background: #ededed;
    border-bottom: 1px solid #d4d4d4;
}

.grip {
    width: 4px;
    height: 28px;
    margin-left: 7px;
    margin-right: 6px;
    border-left: 1px solid #bbb;
    border-right: 1px solid #bbb;
}

.tool {
    width: 35px;
    height: 32px;
    flex: none;
    display: flex;
    align-items: center;
    justify-content: center;
    position: relative;
    border-radius: 2px;
}

.tool-param {
    width: 32px;
}

.tool.on, .cmd.on {
    background: #d8d8d8;
}

.sep {
    width: 1px;
    height: 34px;
    flex: none;
    background: #bdbdbd;
    margin: 0 4px;
}

.tb-param .sep {
    margin: 0 5px;
}

.sep-double {
    margin: 0;
}

.ico {
    width: 22px;
    height: 22px;
}

.ico-sm {
    width: 14px;
    height: 14px;
}

.drop::after {
    content: "";
    position: absolute;
    right: 2px;
    bottom: 1px;
    border-left: 3px solid transparent;
    border-right: 3px solid transparent;
    border-top: 4px solid #555;
}

.schbrd {
    width: 20px;
    height: 22px;
    display: flex;
    flex-direction: column;
    font-size: 8px;
    font-weight: 700;
    line-height: 11px;
    text-align: center;
    color: #fff;
}

.schbrd span:first-child {
    background: #d3222a;
}

.schbrd span:last-child {
    background: #9b9b9b;
}

.badge {
    width: 20px;
    height: 22px;
    color: #fff;
    font-size: 8px;
    font-weight: 700;
    line-height: 22px;
    text-align: center;
}

.badge-blue {
    background: #2f72b8;
}

.badge-orange {
    background: #e08a3c;
}

.stop {
    width: 20px;
    height: 20px;
    border-radius: 50%;
    background: #e0183c;
    display: flex;
    align-items: center;
    justify-content: center;
}

.stop::before {
    content: "";
    width: 12px;
    height: 3px;
    background: #fff;
}

.go {
    width: 20px;
    height: 20px;
    border-radius: 50%;
    background: #d0d0d0;
    border: 1px solid #c6c6c6;
    color: #dedede;
    font-size: 8px;
    line-height: 18px;
    text-align: center;
}

.link-btn {
    display: flex;
    align-items: center;
    gap: 3px;
    flex: none;
}

.link-design {
    margin-left: 22px;
    width: 80px;
}

.link-quote {
    width: 75px;
}

.link-txt {
    font-size: 9.5px;
    line-height: 9px;
    color: #444;
}

.samac {
    display: flex;
    flex-direction: column;
    color: #222;
}

.samac-big {
    font-size: 13.5px;
    line-height: 14px;
}

.samac-small {
    font-size: 9px;
    line-height: 10px;
}

.param-label {
    font-size: 11.5px;
    width: 44px;
    flex: none;
    margin-left: 6px;
}

.select {
    height: 27px;
    background: #fff;
    border: 1px solid #8f8f8f;
    display: flex;
    align-items: center;
    position: relative;
    flex: none;
    padding-left: 6px;
}

.select-layer {
    width: 135px;
    padding-left: 5px;
    margin-right: 5px;
}

.select-angle {
    width: 51px;
    margin-right: 3px;
}

.select-swatch {
    width: 19px;
    height: 19px;
    background: #a0a0a0;
    margin-right: 7px;
}

.arrow {
    position: absolute;
    right: 6px;
    top: 10px;
    border-left: 4px solid transparent;
    border-right: 4px solid transparent;
    border-top: 6px solid #666;
}

.abc {
    font-size: 10px;
    color: #777;
    border-bottom: 1px solid #777;
    line-height: 12px;
}

.abc-flip {
    transform: scaleY(-1);
}

/* workspace */
.workspace {
    flex: 1;
    display: flex;
    min-height: 0;
}

.cmds {
    width: 71px;
    flex: none;
    background: #ededed;
    border-right: 1px solid #d0d0d0;
    padding: 0 2px;
}

.cmds-grip {
    height: 16px;
    margin: 0 7px;
    background: linear-gradient(#c4c4c4, #c4c4c4) 0 7px/100% 1px no-repeat, linear-gradient(#c4c4c4, #c4c4c4) 0 11px/100% 1px no-repeat;
}

.tgroup {
    display: grid;
    grid-template-columns: 33px 33px;
    grid-auto-rows: 33px;
    border-bottom: 1px solid #cfcfcf;
    padding-bottom: 1px;
}

.tgroup-last {
    border-bottom: 0;
}

.cmd {
    display: flex;
    align-items: center;
    justify-content: center;
    position: relative;
}

.cmd.on {
    border-radius: 2px;
    margin: 2px;
}

.big-a {
    font-size: 24px;
    line-height: 24px;
    font-family: "Liberation Sans", sans-serif;
    color: #333;
}

.rval {
    display: flex;
    flex-direction: column;
    font-size: 9px;
    line-height: 10px;
    text-align: center;
    font-family: "Liberation Sans", sans-serif;
}

.rval b {
    color: #444;
    border-bottom: 1px solid #999;
}

.rval i {
    font-style: normal;
    font-weight: 700;
    color: #bbb;
}

.rval-alt i {
    border-bottom: 1px solid #bbb;
}

.rval-alt b {
    border-bottom: 0;
}

.check {
    font-size: 11px;
    color: #777;
    position: relative;
    line-height: 12px;
    margin-top: -6px;
    margin-left: -3px;
}

.check::after {
    content: "";
    position: absolute;
    left: 9px;
    top: 8px;
    width: 12px;
    height: 6px;
    border-left: 3px solid #17b54a;
    border-bottom: 3px solid #17b54a;
    transform: rotate(-45deg);
}

/* panel */
.panel {
    width: 352px;
    flex: none;
    display: flex;
    flex-direction: column;
    background: #ededed;
}

.tabs {
    height: 31px;
    flex: none;
    display: flex;
    padding-left: 1px;
    gap: 4px;
    font-size: 11.5px;
    color: #8a8a8a;
}

.tab {
    height: 29px;
    line-height: 27px;
    text-align: center;
    background: #e0e0e0;
}

.tab-design {
    width: 102px;
}

.tab-inspector {
    width: 68px;
}

.tab-filter {
    width: 96px;
}

.tab.active {
    background: transparent;
    color: #0a96d6;
    height: 31px;
    border-bottom: 3px solid #0a96d6;
}

.sec-head {
    flex: none;
    border: 1px solid #8d9097;
    padding-left: 1px;
    color: #333;
}

.sec-types {
    height: 22px;
    line-height: 16px;
}

.sec-layers {
    height: 28px;
    line-height: 24px;
    padding-left: 0;
}

.list {
    list-style: none;
    margin: 0;
    padding: 0 1px;
    background: #fff;
    border-left: 1px solid #8d9097;
    border-right: 1px solid #8d9097;
}

.list-types {
    height: 371px;
    flex: none;
}

.list-presets {
    height: 180px;
    flex: none;
}

.sec-split {
    height: 7px;
    flex: none;
    border: 1px solid #8d9097;
}

.list-layers {
    flex: 1;
    min-height: 0;
    border-bottom: 1px solid #8d9097;
}

.row {
    height: 20px;
    display: flex;
    align-items: center;
    padding-left: 3px;
    margin-right: 2px;
    white-space: pre;
    color: #333;
}

.list-layers .row:nth-child(even) {
    background: #f5f5f5;
}

.row.sel, .list-layers .row.sel {
    background: #0897d9;
    color: #fff;
}

.fic {
    width: 16px;
    height: 16px;
    margin-right: 6px;
    flex: none;
}

.fic-a {
    font-family: "Liberation Sans", sans-serif;
    font-size: 19px;
    line-height: 16px;
    color: #26446a;
    text-align: center;
}

.preset {
    height: 16px;
    line-height: 16px;
    padding-left: 4px;
    margin-right: 2px;
}

.preset:nth-child(even) {
    background: #f5f5f5;
}

.sw {
    width: 16px;
    height: 16px;
    flex: none;
    margin-right: 6px;
    background: #a0a0a0;
}

.sw-top { background: #a50b0b; }
.sw-bot { background: #0879ae; }
.sw-pad { background: #33b27b; }
.sw-unr { background: #a0a02a; }
.sw-dim { background: #c0a23e; }
.sw-sel { background: #7196bb; }

.sw-dots {
    background-color: #0a0a0a;
    background-size: 3px 3px;
    border: 1px solid;
}

.sw-red {
    border-color: #a50b0b;
    background-image: radial-gradient(#8a0b0b 1px, transparent 1px);
}

.sw-blue {
    border-color: #0879ae;
    background-image: radial-gradient(#0a5d86 1px, transparent 1px);
}

.sw-green {
    border-color: #2e9c6c;
    background-image: radial-gradient(#1f7a52 1px, transparent 1px);
}

.panel-foot {
    height: 30px;
    flex: none;
    display: flex;
    justify-content: flex-end;
    align-items: flex-end;
    border-left: 1px solid #8d9097;
    border-right: 1px solid #8d9097;
    padding-right: 1px;
}

.reset-btn {
    width: 49px;
    height: 26px;
    background: #fff;
    border: 1px solid #a8a8a8;
    border-radius: 4px;
    text-align: center;
    line-height: 24px;
}

/* board view */
.view {
    flex: 1;
    min-width: 0;
    display: flex;
    flex-direction: column;
    background: #ededed;
    padding-left: 4px;
}

.coordbar {
    height: 34px;
    flex: none;
    display: flex;
    align-items: center;
}

.coords {
    width: 139px;
    padding-left: 7px;
    flex: none;
    white-space: nowrap;
}

.cmdline {
    width: 1726px;
    height: 27px;
    margin-top: 1px;
    background: #fff;
    border: 1px solid #0a96d6;
    position: relative;
    flex: none;
}

.cmdline .arrow {
    top: 11px;
    right: 4px;
}

.canvas-row {
    flex: 1;
    min-height: 0;
    display: flex;
}

.canvas {
    width: 1853px;
    flex: none;
    background: #2a2a2a;
}

.board {
    display: block;
    width: 1853px;
    height: 1161px;
}

.vscroll {
    flex: 1;
    position: relative;
    background: #efefef;
}

.vthumb {
    position: absolute;
    left: 5px;
    top: 829px;
    bottom: 0;
    width: 6px;
    background: #868686;
    border-radius: 1px;
}

.hscroll {
    height: 16px;
    flex: none;
    position: relative;
    background: #f9f9f9;
    margin-right: 15px;
}

.hthumb {
    position: absolute;
    left: 349px;
    top: 5px;
    width: 517px;
    height: 6px;
    background: #868686;
    border-radius: 3px;
}

/* board layers */
.outline {
    fill: none;
    stroke: #c0a23e;
    stroke-width: 14;
    stroke-linejoin: round;
}

.substrate {
    fill: #000;
}

.outline-thin {
    stroke: #c0a23e;
    stroke-width: 1.5;
}

.pour {
    fill: #0879ae;
    stroke: #0879ae;
    stroke-width: 6;
    stroke-linejoin: round;
}

.clear-route, .route {
    fill: none;
    stroke-linejoin: round;
    stroke-linecap: round;
}

.clear-route {
    stroke: #000;
    stroke-width: 29;
}

.clear-shape {
    fill: #000;
}

.pad-fill {
    fill: #33b27b;
}

.route {
    stroke: #0879ae;
    stroke-width: 15;
}

.spoke {
    fill: none;
    stroke: #0879ae;
}

.route-lit, .spoke-lit {
    stroke: #35c89c;
}

.origin {
    fill: none;
    stroke: #b8c4c8;
    stroke-width: 1;
    opacity: .75;
}

.origin-yellow {
    stroke: #cccc55;
    opacity: 1;
}

.origin-dots {
    stroke: #fff;
    stroke-dasharray: 1 1;
    opacity: 1;
}

.docu-rect {
    fill: none;
    stroke: rgba(195, 195, 195, .82);
    stroke-width: 9;
}

.docu text {
    fill: rgba(195, 195, 195, .82);
    font-family: "Liberation Sans", sans-serif;
    text-anchor: middle;
}

.t-head {
    font-size: 84px;
}

.t-one {
    font-size: 18px;
}

.t-sig {
    font-size: 20px;
}

.t-pad {
    font-size: 58px;
}

.t-sw {
    font-size: 82px;
}

.t-brand {
    font-size: 94px;
}

.nets text {
    fill: #cccc3a;
    font-family: "Liberation Sans", sans-serif;
    font-size: 14px;
    text-anchor: middle;
    dominant-baseline: middle;
}

/* status bar */
.statusbar {
    height: 25px;
    flex: none;
    display: flex;
    align-items: center;
    background: #ededed;
    border-top: 1px solid #8a8a8a;
}

.status-msg {
    flex: 1;
    padding-left: 2px;
    white-space: nowrap;
}

.status-cell {
    width: 26px;
    height: 21px;
    flex: none;
    border-left: 1px solid #d0d0d0;
    display: flex;
    align-items: center;
    justify-content: center;
}

.status-end {
    width: 18px;
}

.bolt {
    width: 20px;
    height: 20px;
}

/* desktop behind the window */
.desktop {
    height: 5px;
    display: flex;
    overflow: hidden;
}

.desk-light {
    width: 317px;
    flex: none;
    background: #c8d0e0;
}

.desk-dark {
    width: 1583px;
    flex: none;
    background: #1e1e1e;
    color: #ccc;
    padding-left: 94px;
    line-height: 4px;
    font-size: 11px;
    white-space: nowrap;
}

.desk-light2 {
    width: 110px;
}

.desk-dark2 {
    width: 275px;
    padding: 0;
}
```
